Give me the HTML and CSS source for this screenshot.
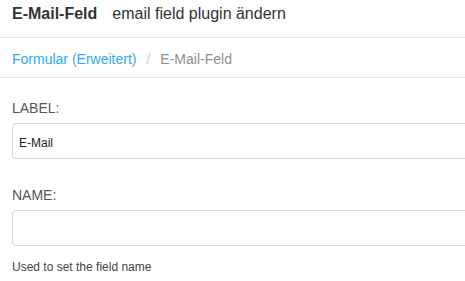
FILE: index.html
```html
<!DOCTYPE html>
<html lang="de">
<head>
<meta charset="utf-8">
<title>E-Mail-Feld</title>
<link rel="stylesheet" href="styles.css">
</head>
<body>
<div class="page">
  <header class="page-header">
    <h1 class="title">E-Mail-Feld<small class="subtitle">email field plugin ändern</small></h1>
  </header>
  <nav class="breadcrumb">
    <a class="crumb-link" href="#">Formular (Erweitert)</a><span class="crumb-sep">/</span><span class="crumb-current">E-Mail-Feld</span>
  </nav>
  <form class="form">
    <div class="group">
      <label class="label" for="f-label">LABEL:</label>
      <input class="input" id="f-label" type="text" value="E-Mail">
    </div>
    <div class="group">
      <label class="label" for="f-name">NAME:</label>
      <input class="input" id="f-name" type="text" value="">
      <p class="help">Used to set the field name</p>
    </div>
  </form>
</div>
</body>
</html>
```
FILE: styles.css
```css
html, body {
  margin: 0;
  padding: 0;
  background: #fff;
  overflow: hidden;
}
body {
  font-family: "Liberation Sans", Arial, Helvetica, sans-serif;
  color: #333;
}
.page {
  width: 465px;
}
.page-header {
  padding: 4px 12px 13px;
  border-bottom: 1px solid #e4e4e4;
}
.title {
  margin: 0;
  font-size: 16px;
  line-height: 20px;
  font-weight: bold;
  color: #333;
  white-space: nowrap;
}
.subtitle {
  margin-left: 15px;
  font-size: 16px;
  font-weight: normal;
  color: #333;
}
.breadcrumb {
  padding: 11px 12px 8px;
  font-size: 14px;
  line-height: 20px;
  border-bottom: 1px solid #e4e4e4;
  white-space: nowrap;
}
.crumb-link {
  color: #2fa8f5;
  text-decoration: none;
}
.crumb-sep {
  padding: 0 10px;
  color: #cfcfcf;
}
.crumb-current {
  color: #8f8f8f;
}
.form {
  padding: 20px 0 0 12px;
  margin: 0;
}
.group + .group {
  margin-top: 26px;
}
.label {
  display: block;
  font-size: 14px;
  line-height: 20px;
  color: #555;
  margin-bottom: 5px;
}
.input {
  display: block;
  box-sizing: border-box;
  width: 100%;
  height: 36px;
  margin: 0;
  padding: 3px 6px 0;
  border: 1px solid #d9d9d9;
  border-right: none;
  border-radius: 4px 0 0 4px;
  font-family: "Liberation Sans", Arial, Helvetica, sans-serif;
  font-size: 12px;
  color: #222;
  background: #fff;
  outline: none;
}
.help {
  margin: 13px 0 0;
  font-size: 12px;
  line-height: 17px;
  color: #444;
}
```
